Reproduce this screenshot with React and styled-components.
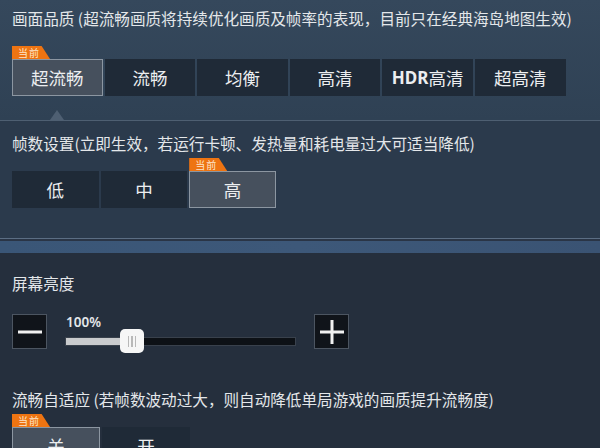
import styled, { createGlobalStyle } from 'styled-components';

const GlobalStyle = createGlobalStyle`
  html, body {
    margin: 0;
    padding: 0;
    background: #232d3b;
  }
  * {
    box-sizing: border-box;
  }
`;

const Screen = styled.div`
  width: 600px;
  height: 448px;
  overflow: hidden;
  font-family: "Noto Sans CJK SC", "Noto Sans", sans-serif;
  color: #e4e7ea;
  background: #252f3d;
`;

const TopSection = styled.section`
  padding: 8px 12px 24px;
  background: linear-gradient(180deg, #35485c 0%, #2f4154 100%);
`;

const Title = styled.div`
  font-size: 15.6px;
  line-height: 20px;
  white-space: nowrap;
  margin-bottom: ${(p) => p.$gap || 5}px;
`;

const TabRow = styled.div`
  display: grid;
  grid-template-columns: repeat(${(p) => p.$cols}, ${(p) => p.$w || 90}px);
  column-gap: 2px;
`;

const TabCell = styled.div`
  display: flex;
  flex-direction: column;
`;

const BadgeSlot = styled.div`
  height: 13px;
  display: flex;
  align-items: flex-end;
`;

const Badge = styled.span`
  width: 38px;
  height: 13px;
  background: #ee7412;
  clip-path: polygon(0 0, 78% 0, 100% 100%, 0 100%);
  color: #fde6cc;
  font-size: 10px;
  line-height: 13px;
  padding-left: 6px;
  letter-spacing: 1px;
`;

const Tab = styled.button`
  height: 37px;
  border: 1px solid ${(p) => (p.$active ? '#8c96a1' : 'transparent')};
  background: ${(p) => (p.$active ? '#46505d' : '#1f2a37')};
  color: #eceef0;
  font-family: "Noto Sans CJK SC", "Noto Sans", sans-serif;
  font-size: 17.5px;
  padding: 0;
  display: flex;
  align-items: center;
  justify-content: center;
`;

const Latin = styled.span`
  font-family: "Noto Sans", sans-serif;
  font-weight: 700;
  font-size: 17px;
`;

const SubPanel = styled.section`
  position: relative;
  border-top: 1px solid #4e5f72;
  background: #2b3a4c;
  padding: 12px 12px 30px;

  &::before {
    content: '';
    position: absolute;
    left: 50px;
    top: -11px;
    border-left: 7px solid transparent;
    border-right: 7px solid transparent;
    border-bottom: 10px solid #4e5f72;
  }
`;

const Separator = styled.div`
  height: 15px;
  border-top: 1px solid #5b6d83;
  box-shadow: inset 0 2px 0 #2a3546;
  background: linear-gradient(90deg, #3a5677, #3d5879 50%, #3a5373);
`;

const LowerSection = styled.section`
  padding: 20px 12px 0;
`;

const SliderRow = styled.div`
  display: flex;
  align-items: flex-start;
  gap: 18px;
  margin: 21px 0 40px;
`;

const StepButton = styled.div`
  width: 35px;
  height: 35px;
  background: #10141a;
  border: 1px solid #4c5561;
  display: flex;
  align-items: center;
  justify-content: center;
`;

const SliderBlock = styled.div`
  width: 231px;
  display: flex;
  flex-direction: column;
`;

const Percent = styled.div`
  font-family: "Noto Sans", sans-serif;
  font-weight: 600;
  font-size: 13.5px;
  line-height: 16px;
  padding-left: 1px;
  margin-bottom: 7px;
`;

const Track = styled.div`
  position: relative;
  height: 9px;
  background: #0d1116;
  border: 1px solid #39414c;
`;

const Fill = styled.div`
  height: 100%;
  background: #c9cbcd;
`;

const Handle = styled.div`
  position: absolute;
  top: -9px;
  width: 24px;
  height: 24px;
  border-radius: 5px;
  background: #f6f6f6;
  display: flex;
  align-items: center;
  justify-content: center;
  gap: 2px;
  & i {
    width: 1.5px;
    height: 11px;
    background: #b8b8b8;
  }
`;

const IconMinus = () => (
  <svg width="24" height="24" viewBox="0 0 24 24">
    <rect x="0" y="10.5" width="24" height="3" fill="#f1f1f1" />
  </svg>
);

const IconPlus = () => (
  <svg width="24" height="24" viewBox="0 0 24 24">
    <rect x="0" y="10.5" width="24" height="3" fill="#f1f1f1" />
    <rect x="10.5" y="0" width="3" height="24" fill="#f1f1f1" />
  </svg>
);

const TabGroup = ({ items, current, cols, w }) => (
  <TabRow $cols={cols} $w={w}>
    {items.map((label, i) => (
      <TabCell key={i}>
        <BadgeSlot>{i === current && <Badge>当前</Badge>}</BadgeSlot>
        <Tab $active={i === current}>{label}</Tab>
      </TabCell>
    ))}
  </TabRow>
);

const quality = [
  '超流畅',
  '流畅',
  '均衡',
  '高清',
  <>
    <Latin>HDR</Latin>高清
  </>,
  '超高清',
];

const App = () => {
  const knob = 54;
  return (
    <>
      <GlobalStyle />
      <Screen>
        <TopSection>
          <Title $gap={18}>画面品质 (超流畅画质将持续优化画质及帧率的表现，目前只在经典海岛地图生效)</Title>
          <TabGroup items={quality} current={0} cols={6} w={90.6} />
        </TopSection>

        <SubPanel>
          <Title>帧数设置(立即生效，若运行卡顿、发热量和耗电量过大可适当降低)</Title>
          <TabGroup items={['低', '中', '高']} current={2} cols={3} w={86.6} />
        </SubPanel>

        <Separator />

        <LowerSection>
          <Title>屏幕亮度</Title>
          <SliderRow>
            <StepButton>
              <IconMinus />
            </StepButton>
            <SliderBlock>
              <Percent>100%</Percent>
              <Track>
                <Fill style={{ width: knob + 8 }} />
                <Handle style={{ left: knob }}>
                  <i />
                  <i />
                  <i />
                </Handle>
              </Track>
            </SliderBlock>
            <StepButton>
              <IconPlus />
            </StepButton>
          </SliderRow>

          <Title>流畅自适应 (若帧数波动过大，则自动降低单局游戏的画质提升流畅度)</Title>
          <TabGroup items={['关', '开']} current={0} cols={2} w={88} />
        </LowerSection>
      </Screen>
    </>
  );
};

export default App;
